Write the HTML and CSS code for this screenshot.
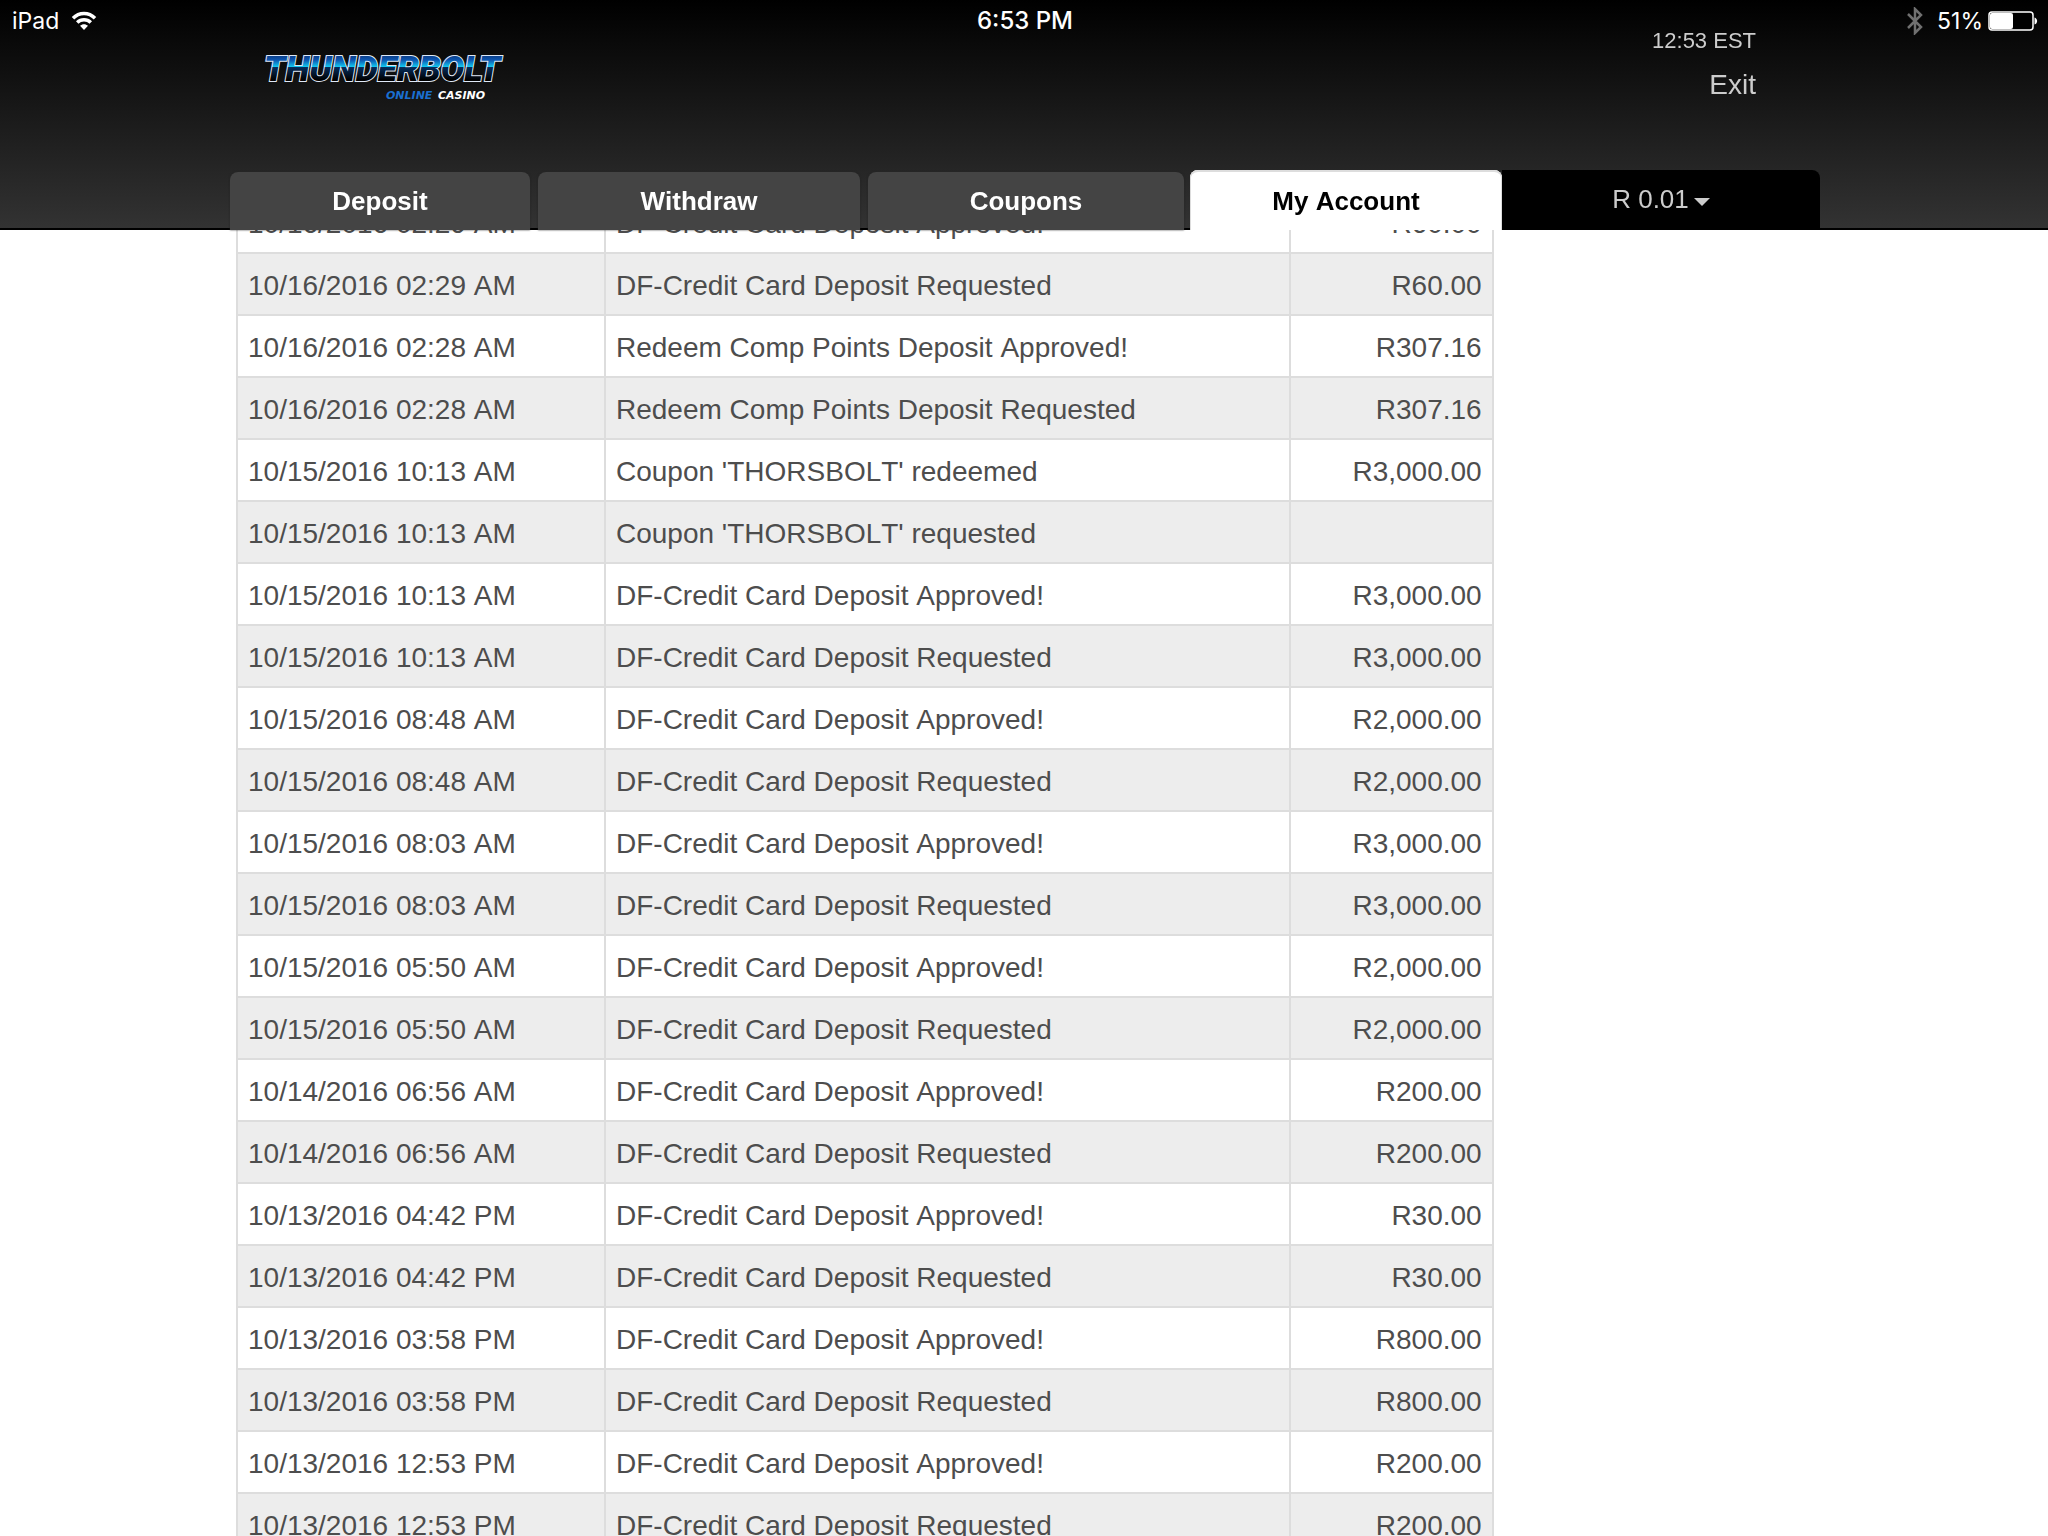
FILE: index.html
```html
<!DOCTYPE html>
<html lang="en">
<head>
    <meta charset="UTF-8">
    <meta name="viewport" content="width=device-width, initial-scale=1.0">
    <title>Thunderbolt Online Casino - My Account</title>
    <link rel="stylesheet" href="styles.css">
</head>
<body>

    <header class="header">
        <div class="status-bar">
            <div class="status-left">
                <span>iPad</span>
                <svg class="wifi" width="26" height="20" viewBox="0 0 26 20" fill="none" stroke="#fff" stroke-width="3.5">
                    <path d="M2 7.2C8.200 .8 17.800 .8 24 7.200"/>
                    <path d="M6.200 11.600C10 7.900 16 7.900 19.800 11.600"/>
                    <path d="M13 19L9 14.800C11.300 12.700 14.700 12.700 17 14.800Z" fill="#fff" stroke="none"/>
                </svg>
            </div>
            <div class="status-time">6:53 PM</div>
            <div class="status-right">
                <svg class="bluetooth" width="16" height="28" viewBox="0 0 16 28" fill="none" stroke="#707070" stroke-width="2.5">
                    <path d="M1 7L14 20L8 26V2L14 8L1 21"/>
                </svg>
                <span>51%</span>
                <svg class="battery" width="50" height="20" viewBox="0 0 50 20">
                    <rect x="1" y="1" width="44" height="18" rx="3" fill="#000" stroke="#fff" stroke-width="1.5"/>
                    <rect x="2" y="2" width="23" height="16" rx="2" fill="#fff"/>
                    <path d="M46.500 6.500C50 7.500 50 12.500 46.500 13.500Z" fill="#fff"/>
                </svg>
            </div>
        </div>

        <div class="container">
            <div class="top">
                <svg class="logo" width="250" height="66" viewBox="0 0 250 66" role="img" aria-label="Thunderbolt Online Casino">
                    <defs>
                        <linearGradient id="bolt" gradientUnits="userSpaceOnUse" x1="0" y1="15" x2="0" y2="40">
                            <stop offset="0" stop-color="#0b3a82"/>
                            <stop offset=".2" stop-color="#0d56b0"/>
                            <stop offset=".49" stop-color="#12d0f5"/>
                            <stop offset=".5" stop-color="#052d5c"/>
                            <stop offset="1" stop-color="#000"/>
                        </linearGradient>
                    </defs>
                    <text class="logo-name" x="0" y="41" fill="url(#bolt)">THUNDERBOLT</text>
                    <text class="logo-sub" x="122" y="59" fill="#1a6fd0">ONLINE</text>
                    <text class="logo-sub" x="174" y="59" fill="#fff">CASINO</text>
                </svg>
                <div class="session">
                    <span class="clock">12:53 EST</span>
                    <a class="exit" href="#">Exit</a>
                </div>
            </div>

            <nav class="tabs">
                <a class="tab tab-deposit" href="#">Deposit</a>
                <a class="tab tab-withdraw" href="#">Withdraw</a>
                <a class="tab tab-coupons" href="#">Coupons</a>
                <a class="tab tab-account active" href="#">My Account</a>
                <button class="balance" type="button">R 0.01<span class="caret"></span></button>
            </nav>
        </div>
    </header>

    <main class="container">
        <table class="history">
            <colgroup>
                <col class="col-date">
                <col class="col-text">
                <col class="col-amount">
            </colgroup>
            <tbody>
                <tr><td>10/16/2016 02:29 AM</td><td>DF-Credit Card Deposit Approved!</td><td class="amount">R60.00</td></tr>
                <tr><td>10/16/2016 02:29 AM</td><td>DF-Credit Card Deposit Requested</td><td class="amount">R60.00</td></tr>
                <tr><td>10/16/2016 02:28 AM</td><td>Redeem Comp Points Deposit Approved!</td><td class="amount">R307.16</td></tr>
                <tr><td>10/16/2016 02:28 AM</td><td>Redeem Comp Points Deposit Requested</td><td class="amount">R307.16</td></tr>
                <tr><td>10/15/2016 10:13 AM</td><td>Coupon 'THORSBOLT' redeemed</td><td class="amount">R3,000.00</td></tr>
                <tr><td>10/15/2016 10:13 AM</td><td>Coupon 'THORSBOLT' requested</td><td class="amount"></td></tr>
                <tr><td>10/15/2016 10:13 AM</td><td>DF-Credit Card Deposit Approved!</td><td class="amount">R3,000.00</td></tr>
                <tr><td>10/15/2016 10:13 AM</td><td>DF-Credit Card Deposit Requested</td><td class="amount">R3,000.00</td></tr>
                <tr><td>10/15/2016 08:48 AM</td><td>DF-Credit Card Deposit Approved!</td><td class="amount">R2,000.00</td></tr>
                <tr><td>10/15/2016 08:48 AM</td><td>DF-Credit Card Deposit Requested</td><td class="amount">R2,000.00</td></tr>
                <tr><td>10/15/2016 08:03 AM</td><td>DF-Credit Card Deposit Approved!</td><td class="amount">R3,000.00</td></tr>
                <tr><td>10/15/2016 08:03 AM</td><td>DF-Credit Card Deposit Requested</td><td class="amount">R3,000.00</td></tr>
                <tr><td>10/15/2016 05:50 AM</td><td>DF-Credit Card Deposit Approved!</td><td class="amount">R2,000.00</td></tr>
                <tr><td>10/15/2016 05:50 AM</td><td>DF-Credit Card Deposit Requested</td><td class="amount">R2,000.00</td></tr>
                <tr><td>10/14/2016 06:56 AM</td><td>DF-Credit Card Deposit Approved!</td><td class="amount">R200.00</td></tr>
                <tr><td>10/14/2016 06:56 AM</td><td>DF-Credit Card Deposit Requested</td><td class="amount">R200.00</td></tr>
                <tr><td>10/13/2016 04:42 PM</td><td>DF-Credit Card Deposit Approved!</td><td class="amount">R30.00</td></tr>
                <tr><td>10/13/2016 04:42 PM</td><td>DF-Credit Card Deposit Requested</td><td class="amount">R30.00</td></tr>
                <tr><td>10/13/2016 03:58 PM</td><td>DF-Credit Card Deposit Approved!</td><td class="amount">R800.00</td></tr>
                <tr><td>10/13/2016 03:58 PM</td><td>DF-Credit Card Deposit Requested</td><td class="amount">R800.00</td></tr>
                <tr><td>10/13/2016 12:53 PM</td><td>DF-Credit Card Deposit Approved!</td><td class="amount">R200.00</td></tr>
                <tr><td>10/13/2016 12:53 PM</td><td>DF-Credit Card Deposit Requested</td><td class="amount">R200.00</td></tr>
            </tbody>
        </table>
    </main>

</body>
</html>
```

FILE: styles.css
```css
* {
    box-sizing: border-box;
}
body {
    margin: 0;
    height: 100vh;
    overflow: hidden;
    background-color: #fff;
    color: #4d4d4d;
    font-family: 'Liberation Sans', Arial, sans-serif;
    font-size: 28px;
    font-kerning: none;
}
a {
    color: inherit;
    text-decoration: none;
}
.container {
    max-width: 1592px;
    margin: 0 auto;
}

.header {
    position: sticky;
    top: 0;
    z-index: 1;
    background: linear-gradient(#000, #333);
    box-shadow: inset 0 -2px 0 #000;
}
.status-bar {
    display: grid;
    grid-template-columns: 1fr auto 1fr;
    align-items: center;
    height: 42px;
    padding: 0 10px 0 12px;
    color: #fff;
    font-family: Inter, Roboto, sans-serif;
    font-size: 23px;
    line-height: 42px;
}
.status-left,
.status-right {
    display: flex;
    align-items: center;
}
.status-left {
    gap: 12px;
}
.status-right {
    justify-content: flex-end;
}
.status-time {
    font-size: 24px;
    font-weight: 500;
}
.bluetooth {
    margin-right: 14px;
}
.battery {
    margin-left: 5px;
}

.top {
    display: flex;
    justify-content: space-between;
    align-items: flex-start;
    margin-top: -14px;
    padding: 0 64px 70px 36px;
}
.logo {
    margin-top: 12px;
    margin-bottom: -6px;
}
.logo-name {
    font: italic 900 35px Roboto, 'Liberation Sans', sans-serif;
    stroke: #dfe9f7;
    stroke-width: 2px;
    paint-order: stroke;
}
.logo-sub {
    font: italic bold 11px 'DejaVu Sans', sans-serif;
}
.session {
    display: flex;
    flex-direction: column;
    align-items: flex-end;
    gap: 16px;
    color: #ccc;
}
.clock {
    font-size: 22px;
    line-height: 26px;
}
.exit {
    line-height: 30px;
}

.tabs {
    display: flex;
    align-items: flex-end;
    height: 60px;
    padding-left: 2px;
}
.tab {
    height: 58px;
    margin-right: 8px;
    border-radius: 8px 8px 0 0;
    background-color: #444;
    box-shadow: 0 0 2px #222;
    color: #fff;
    font-size: 26px;
    font-weight: bold;
    line-height: 58px;
    text-align: center;
}
.tab-deposit {
    flex: 300 1 0;
}
.tab-withdraw {
    flex: 322 1 0;
}
.tab-coupons {
    flex: 316 1 0;
    margin-right: 6px;
}
.tab-account {
    flex: 312 1 0;
    margin-right: 0;
}
.tab.active {
    height: 60px;
    padding-top: 2px;
    background-color: #fff;
    box-shadow: inset 0 2px 0 #ddd, inset 1px 0 0 #ddd, inset -1px 0 0 #ddd;
    color: #000;
}
.balance {
    flex: 318 1 0;
    display: flex;
    align-items: center;
    justify-content: center;
    gap: 5px;
    height: 60px;
    padding: 0 0 2px;
    border: none;
    border-radius: 0 8px 0 0;
    background-color: #000;
    color: #ccc;
    font-family: inherit;
    font-size: 26px;
    line-height: 58px;
}
.caret {
    margin-top: 6px;
    border: 8px solid transparent;
    border-top-color: #ccc;
    border-bottom: none;
}

.history {
    width: 79%;
    margin: -40px 0 0 8px;
    border-spacing: 0;
    border-left: 2px solid #ddd;
    border-top: 2px solid #ddd;
    table-layout: fixed;
}
.col-date {
    width: 368px;
}
.col-amount {
    width: 203px;
}
.history td {
    height: 62px;
    padding: 16px 10px 12px;
    border-right: 2px solid #ddd;
    border-bottom: 2px solid #ddd;
    line-height: 32px;
}
.history tr:nth-child(even) {
    background-color: #ededed;
}
.history .amount {
    text-align: right;
}
```
